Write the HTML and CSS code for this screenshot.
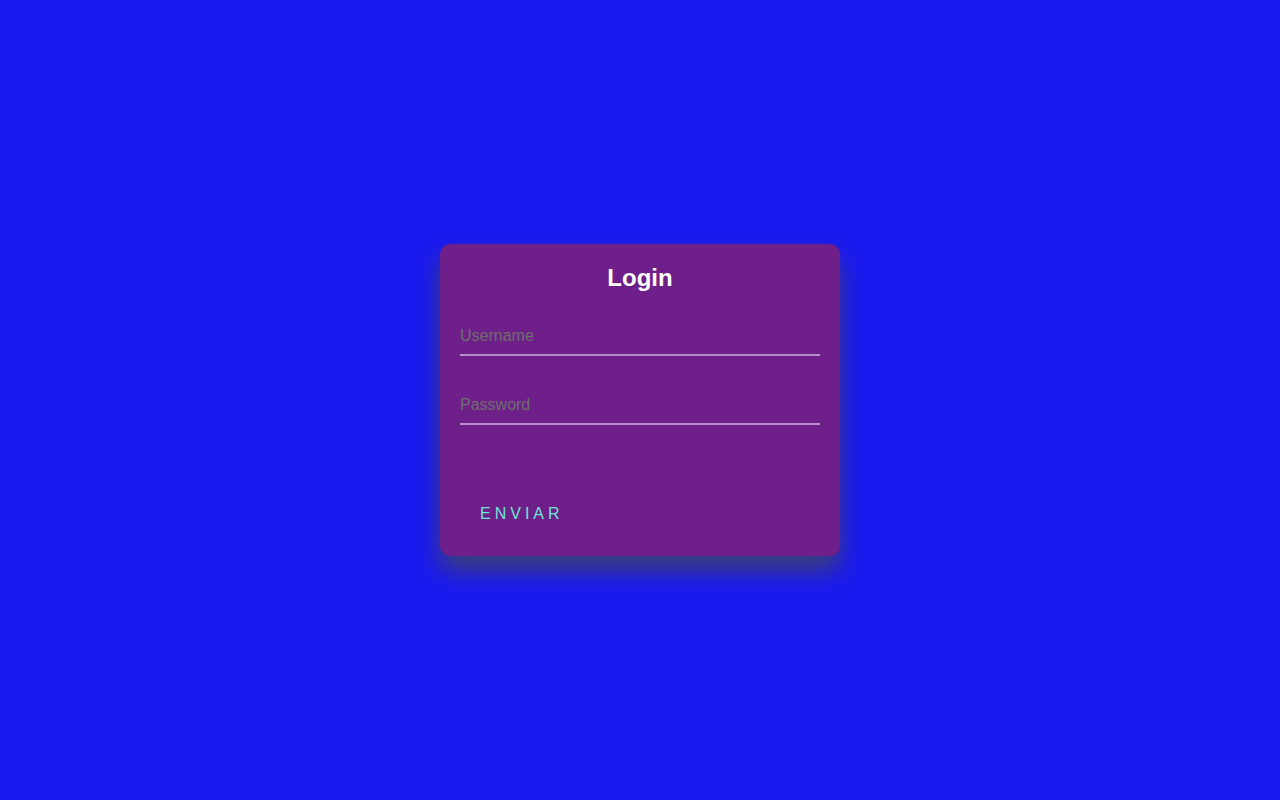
FILE: index.html
```html
<!DOCTYPE html>
<html lang="es">
<head>
<meta charset="utf-8">
<title>Login</title>
<link rel="stylesheet" href="styles.css">
</head>
<body>
<main class="page">
  <form class="login-box">
    <h2 class="title">Login</h2>
    <div class="user-box">
      <input type="text" placeholder="Username">
    </div>
    <div class="user-box">
      <input type="password" placeholder="Password">
    </div>
    <div class="actions">
      <a class="submit" href="#">ENVIAR</a>
    </div>
  </form>
</main>
</body>
</html>
```

FILE: styles.css
```css
* { box-sizing: border-box; }
html, body {
  margin: 0;
  padding: 0;
  height: 100%;
}
body {
  background: #1a1af0;
  font-family: "Liberation Sans", Arial, sans-serif;
}
.page {
  min-height: 100vh;
  display: flex;
  align-items: center;
  justify-content: center;
}
.login-box {
  width: 400px;
  padding: 20px 20px 23px;
  background: #6f1f8a;
  border-radius: 10px;
  box-shadow: 0 15px 25px rgba(74, 78, 74, 0.72);
  display: flex;
  flex-direction: column;
}
.title {
  margin: 0 0 24px;
  padding: 0;
  color: #fff;
  text-align: center;
  font-size: 24px;
  line-height: 28px;
  font-weight: bold;
}
.user-box input {
  display: block;
  width: 100%;
  padding: 11px 0 9px;
  font-family: "Liberation Sans", Arial, sans-serif;
  font-size: 16px;
  line-height: 18px;
  color: #fff;
  border: none;
  border-bottom: 2px solid #b98bcc;
  outline: none;
  background: transparent;
  margin: 0 0 29px;
}
.user-box input::placeholder {
  color: #6e6e6e;
  opacity: 1;
}
.actions {
  display: flex;
  margin-top: 41px;
}
.submit {
  padding: 10px 20px;
  color: #6ee6d3;
  font-size: 16px;
  line-height: 18px;
  letter-spacing: 4px;
  text-decoration: none;
  text-transform: uppercase;
}
```
